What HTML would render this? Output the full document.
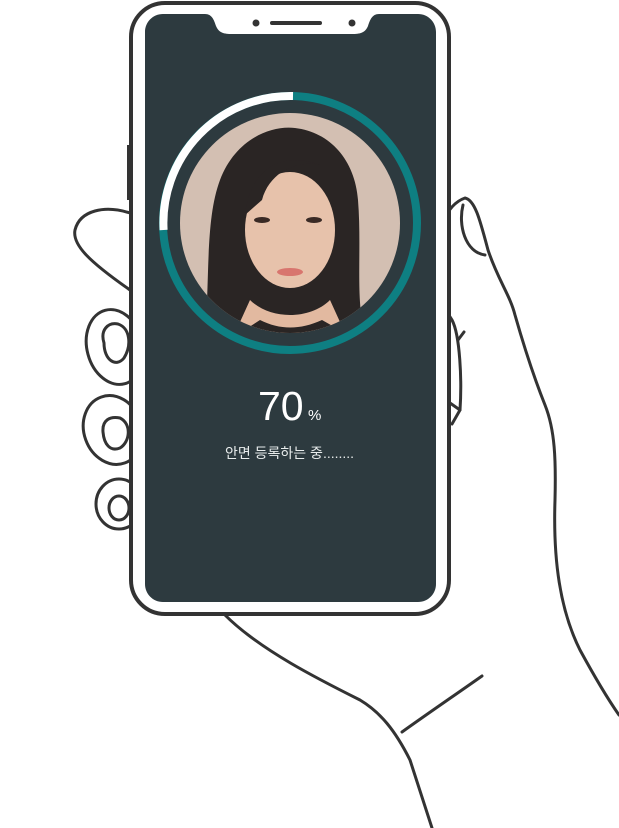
<!DOCTYPE html>
<html><head><meta charset="utf-8"><style>
html,body{margin:0;padding:0;background:#fff;width:619px;height:828px;overflow:hidden}
svg{display:block}
</style></head><body>
<svg width="619" height="828" viewBox="0 0 619 828" xmlns="http://www.w3.org/2000/svg">
<g fill="none" stroke="#333" stroke-width="3" stroke-linecap="round" stroke-linejoin="round">
 <!-- hand back -->
 <path d="M225 615 C260 650 320 680 360 700 C380 712 395 730 410 760 L432 828"/>
 <path d="M402 732 C430 712 455 695 482 676"/>
 <path d="M437 262 C435 235 445 205 465 198 C475 200 480 220 488 250 C498 280 510 295 515 315 C525 350 535 380 545 405 C555 430 556 460 555 500 C553 560 560 610 580 650 C592 672 605 695 619 715"/>
 <path d="M463 205 C458 225 465 252 485 255"/>
 <path d="M437 262 C438 290 445 310 452 320 C460 335 462 380 460 410 L452 424"/>
 <path d="M458 340 L464 332"/>
 <path d="M450 403 L460 410"/>
 <!-- left fingers -->
 <path d="M130 213 C105 205 80 210 75 230 C72 245 90 262 130 290"/>
 <ellipse cx="115" cy="347" rx="28" ry="38" transform="rotate(-15 115 347)"/>
 <path d="M104 343 C100 330 108 322 118 324 C130 328 132 345 124 358 C116 368 104 360 104 343 Z"/>
 <ellipse cx="113" cy="430" rx="29" ry="35" transform="rotate(-20 113 430)"/>
 <path d="M103 432 C102 420 110 416 120 418 C132 424 130 442 120 448 C110 452 104 444 103 432 Z"/>
 <ellipse cx="119" cy="504" rx="23" ry="25"/>
 <ellipse cx="119" cy="508" rx="10" ry="12"/>
</g>
<!-- phone -->
<rect x="131" y="3" width="318" height="611" rx="34" fill="#fff" stroke="#333" stroke-width="4"/>
<rect x="127" y="145" width="4" height="55" fill="#333"/>
<path d="M163 14 H205 C212 14 214 20 216 26 C219 33 224 34 232 34 H352 C360 34 365 33 368 26 C370 20 372 14 379 14 H418 C428 14 436 22 436 32 V584 C436 594 428 602 418 602 H163 C153 602 145 594 145 584 V32 C145 22 153 14 163 14 Z" fill="#2d3a3f"/>
<circle cx="256" cy="23" r="3.5" fill="#333"/>
<circle cx="352" cy="23" r="3.5" fill="#333"/>
<rect x="270" y="21" width="52" height="4" rx="2" fill="#333"/>
<!-- ring -->
<circle cx="290" cy="223" r="127" fill="none" stroke="#0e7f82" stroke-width="8"/>
<path d="M163.6 230 A127 127 0 0 1 293 96" fill="none" stroke="#fff" stroke-width="8"/>
<circle cx="290" cy="223" r="110" fill="#d3bfb2"/>
<clipPath id="c"><circle cx="290" cy="223" r="110"/></clipPath>
<g clip-path="url(#c)">
 <path d="M205 333 C210 280 205 220 220 180 C235 140 270 125 295 128 C330 132 355 160 358 200 C362 250 355 300 365 333 Z" fill="#2a2524"/>
 <ellipse cx="290" cy="230" rx="45" ry="58" fill="#e7c2ab"/>
 <path d="M245 215 C250 170 280 150 320 165 C300 160 270 170 262 200 Z" fill="#2a2524"/>
 <path d="M250 300 C270 320 310 320 330 300 L345 333 H235 Z" fill="#e2b9a0"/>
 <path d="M240 333 L260 320 C280 330 300 330 322 320 L345 333 Z" fill="#2a2524"/>
 <ellipse cx="262" cy="220" rx="8" ry="3" fill="#3a2a25"/>
 <ellipse cx="314" cy="220" rx="8" ry="3" fill="#3a2a25"/>
 <ellipse cx="290" cy="272" rx="13" ry="4" fill="#d8756e"/>
</g>
<text x="258" y="420" font-family="Liberation Sans, sans-serif" font-size="41" fill="#fff">70</text>
<text x="308" y="420" font-family="Liberation Sans, sans-serif" font-size="15" fill="#fff">%</text>
<text x="225" y="458" font-family="Liberation Sans, 'Noto Sans CJK KR', sans-serif" font-size="14" fill="#e8ecec">안면 등록하는 중........</text>
</svg>
</body></html>
